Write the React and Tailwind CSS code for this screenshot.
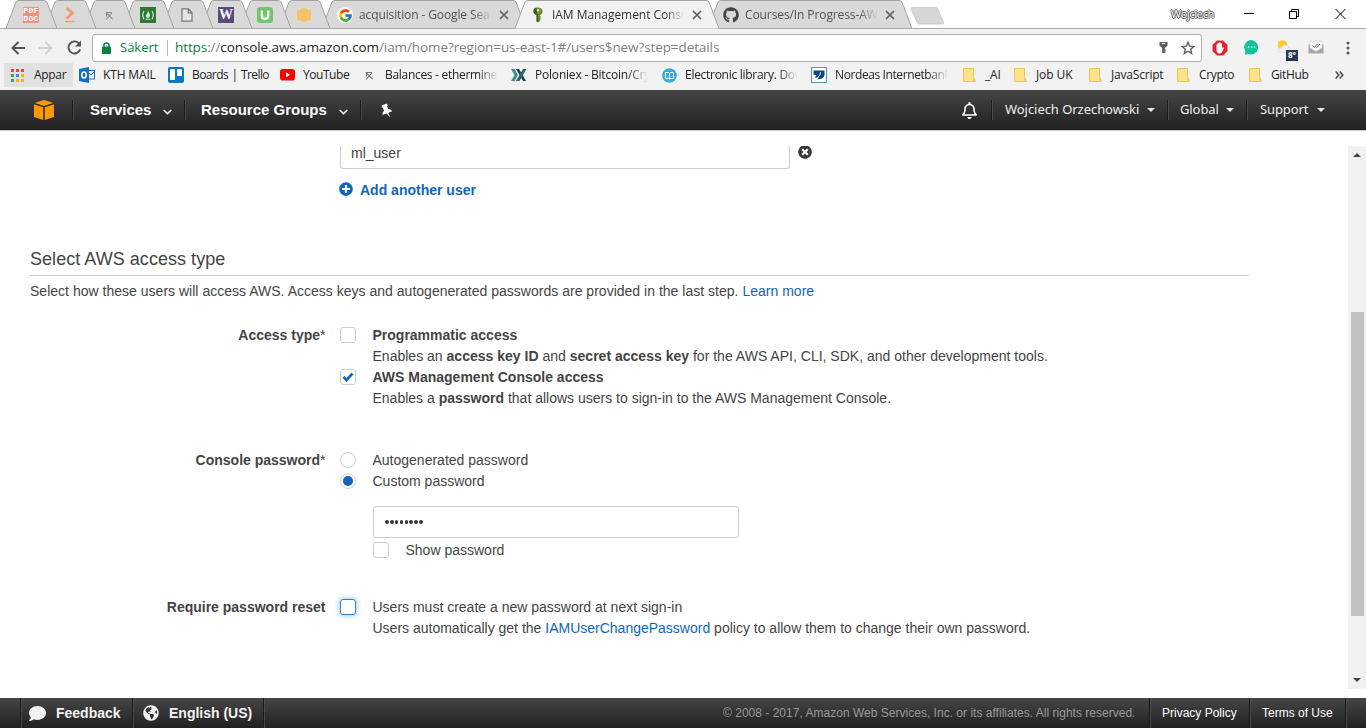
import React from "react";
import { FaComment, FaGlobeAmericas, FaPlusCircle, FaTimesCircle, FaThumbtack, FaRegBell, FaGithub } from "react-icons/fa";
import { FcGoogle } from "react-icons/fc";

/* ---------- browser chrome ---------- */

function TabShape({ w, active }) {
  return (
    <svg className="absolute inset-0" width={w} height="29" viewBox={`0 0 ${w} 29`}>
      <path
        d={`M0 28.5 L10 2 Q11 0.5 13 0.5 H${w - 13} Q${w - 11} 0.5 ${w - 10} 2 L${w} 28.5`}
        fill={active ? "#f2f2f2" : "#d9d9d9"}
        stroke="#a3a3a3"
      />
      {!active && <path d={`M0 28.5 H${w}`} stroke="#a9a9a9" />}
    </svg>
  );
}

function SmallTab({ children, z }) {
  return (
    <div className={`relative -mr-3 flex h-[29px] w-[51px] shrink-0 items-center justify-center pr-px ${z}`}>
      <TabShape w={51} />
      <div className="relative mt-px flex size-4 items-center justify-center">{children}</div>
    </div>
  );
}

function WideTab({ icon, label, active, z }) {
  return (
    <div className={`relative -mr-[11px] flex h-[29px] w-[204px] shrink-0 items-center pl-[15px] ${z}`}>
      <TabShape w={204} active={active} />
      <div className="relative mt-px flex size-4 items-center justify-center">{icon}</div>
      <div
        className={`relative ml-[6px] w-[133px] overflow-hidden text-[12px] leading-4 whitespace-nowrap [mask-image:linear-gradient(to_right,black_85%,transparent)] ${
          active ? "text-[#333]" : "text-[#505050]"
        }`}
      >
        {label}
      </div>
      <svg className="relative ml-[7px]" width="10" height="10" viewBox="0 0 10 10">
        <path d="M1 1 L9 9 M9 1 L1 9" stroke="#5f5f5f" strokeWidth="1.7" />
      </svg>
    </div>
  );
}

const BoxIcon = ({ className, size = 16, color = "#f90", gap = "#2f2f2f" }) => (
  <svg className={className} width={size} height={size} viewBox="0 0 20 20">
    <path d="M10 0 L19.5 3 L10 6 L0.5 3 Z" fill={color} />
    <path d="M0 4.2 L9.4 7.2 V20 L0 17 Z" fill={color} />
    <path d="M20 4.2 L10.6 7.2 V20 L20 17 Z" fill={color} />
    <path d="M0.3 3.6 L10 6.7 L19.7 3.6 M10 6.7 V20" stroke={gap} strokeWidth="1" fill="none" />
  </svg>
);

const MinerIcon = ({ color = "#777" }) => (
  <svg width="9" height="9" viewBox="0 0 9 9">
    <path d="M0.5 1.5 H7 M1.5 1.5 V5.5 M1.5 2 L7.5 8.2 M7 2 L1 8.5" stroke={color} strokeWidth="1.1" fill="none" />
  </svg>
);

const KeyIcon = () => (
  <svg width="10" height="16" viewBox="0 0 10 16">
    <path d="M5 0.5 C8 0.5 9.6 2.3 9.6 4.4 C9.6 6.4 8.4 7.4 7 7.9 V9 L8 10 L7 11 L8 12 L7 13 V14 L5 15.6 L3.6 14.4 V7.9 C1.6 7.4 0.4 6.2 0.4 4.4 C0.4 2.2 2 0.5 5 0.5Z" fill="#6b8e33" />
    <path d="M5.2 8 V15.2 L3.6 14.2 V7.8 C1.6 7.4 0.4 6.2 0.4 4.4 C0.4 2.6 1.6 1 3.5 0.6 L4 7Z" fill="#3f5d1c" />
    <circle cx="5" cy="3.2" r="1.2" fill="#f2f2f2" />
  </svg>
);

function TabStrip() {
  return (
    <div className="flex h-[29px] items-start bg-white pl-[6px] shadow-[inset_0_-1px_0_#a9a9a9]">
      <SmallTab z="z-[9]">
        <div className="flex size-4 flex-col items-center justify-center bg-[#ee9384] font-['Liberation_Mono',monospace] text-[8px] leading-[8px] font-bold tracking-[0.3px] text-white">
          <span>PDF</span>
          <span>DOC</span>
        </div>
      </SmallTab>
      <SmallTab z="z-[8]">
        <svg width="12" height="16" viewBox="0 0 12 16">
          <path d="M2.5 1 L8.5 6 L2.5 11.5" stroke="#f39a66" strokeWidth="2.8" fill="none" />
          <path d="M1 14.5 H10.5" stroke="#f39a66" strokeWidth="1.4" />
        </svg>
      </SmallTab>
      <SmallTab z="z-[7]"><MinerIcon color="#8f8f8f" /></SmallTab>
      <SmallTab z="z-[6]">
        <svg width="16" height="16" viewBox="0 0 16 16">
          <rect width="16" height="16" fill="#2f7a33" />
          <path d="M4 4 Q1.5 8 4 12 M12 4 Q14.5 8 12 12" stroke="#d9ecd9" strokeWidth="1.1" fill="none" />
          <path d="M8 3.5 C8.5 5.5 10.3 6.8 10 8.8 C9.8 10.2 9 10.8 8 10.8 C7 10.8 6 10.2 5.9 8.8 C5.9 7.8 6.8 7.5 7 6.5 C7.4 5.6 7.8 4.8 8 3.5Z" fill="#d9ecd9" />
          <path d="M5.5 12.2 H10.5" stroke="#d9ecd9" />
        </svg>
      </SmallTab>
      <SmallTab z="z-[5]">
        <svg width="12" height="14" viewBox="0 0 12 14">
          <path d="M1 0.8 H7.5 L11 4.5 V13.2 H1 Z M7.2 1 V4.8 H11" stroke="#777" strokeWidth="1.2" fill="#e6e6e6" />
        </svg>
      </SmallTab>
      <SmallTab z="z-[4]">
        <div className="flex size-4 items-center justify-center bg-[#5a4b7d] font-['Liberation_Serif',serif] text-[14px] leading-4 font-bold text-white">W</div>
      </SmallTab>
      <SmallTab z="z-[3]">
        <svg width="16" height="16" viewBox="0 0 16 16">
          <rect width="16" height="16" rx="3" fill="#6fc76b" />
          <path d="M4.8 3.5 V8.5 Q4.8 12 8 12 Q11.2 12 11.2 8.500 V3.500" stroke="#fff" strokeWidth="2.3" fill="none" />
        </svg>
      </SmallTab>
      <SmallTab z="z-[2]"><BoxIcon size={14} color="#f9c262" gap="#e9ae55" /></SmallTab>
      <div className="ml-1 flex">
        <WideTab
          z="z-[1]"
          icon={<span className="flex size-4 items-center justify-center rounded-full bg-white"><FcGoogle size={15} /></span>}
          label={<span className="tracking-[-0.12px]">acquisition - Google Search</span>}
        />
        <WideTab active z="z-10" icon={<KeyIcon />} label={<span className="tracking-[-0.05px]">IAM Management Console</span>} />
        <WideTab z="z-[1]" icon={<FaGithub size={16} color="#444" />} label={<span className="tracking-[-0.1px]">Courses/In Progress-AWS</span>} />
      </div>
      <svg className="mt-[7px] ml-[9px]" width="35" height="18" viewBox="0 0 35 18">
        <path d="M2 0.5 H26 Q27.500 0.500 28 2 L33.500 15.500 Q34 17 32 17 H10 Q8 17 7.300 15.500 L1 2 Q0.500 0.500 2 0.500Z" fill="#d6d6d6" stroke="#c4c4c4" strokeWidth="0.8" />
      </svg>
      <div className="ml-auto flex items-center pt-[6px]">
        <span className="mr-[30px] text-[11px] leading-4 tracking-[-0.35px] text-white [text-shadow:1px_0_0_#555,-1px_0_0_#555,0_1px_0_#555,0_-1px_0_#555]">Wojciech</span>
        <svg className="mr-[35px]" width="10" height="10" viewBox="0 0 10 10"><path d="M0 4.500 H10" stroke="#000" /></svg>
        <svg className="mr-[36px]" width="10" height="10" viewBox="0 0 10 10">
          <path d="M0.500 2.500 H7.500 V9.500 H0.500 Z M2.500 2.500 V0.500 H9.500 V7.500 H7.500" stroke="#000" fill="none" />
        </svg>
        <svg className="mr-5" width="11" height="10" viewBox="0 0 11 10"><path d="M0.500 0 L10.500 10 M10.500 0 L0.500 10" stroke="#000" /></svg>
      </div>
    </div>
  );
}

function AddressBar() {
  return (
    <div className="flex h-[36px] items-center pt-px">
      <svg className="ml-[11px]" width="14" height="14" viewBox="0 0 14 14">
        <path d="M14 7 H1.500 M7.500 1 L1.500 7 L7.500 13" stroke="#555" strokeWidth="1.900" fill="none" />
      </svg>
      <svg className="ml-[14px]" width="14" height="14" viewBox="0 0 14 14">
        <path d="M0 7 H12.500 M6.500 1 L12.500 7 L6.500 13" stroke="#d0d0d0" strokeWidth="1.900" fill="none" />
      </svg>
      <svg className="ml-[14px]" width="15" height="15" viewBox="0 0 15 15">
        <path d="M13.200 9.400 A6 6 0 1 1 11.800 3.200 L13 4.500" stroke="#555" strokeWidth="1.900" fill="none" />
        <path d="M14 0.500 V6.500 H8 Z" fill="#555" />
      </svg>
      <div className="ml-[10px] flex h-[28px] w-[1110px] items-center rounded-[3px] border border-[#b0b0b0] bg-white text-[14px]">
        <svg className="ml-[9px]" width="9" height="12" viewBox="0 0 9 12">
          <rect y="4.500" width="9" height="7.500" rx="0.800" fill="#0b8043" />
          <path d="M2 5 V3.200 Q2 1 4.500 1 Q7 1 7 3.200 V5" stroke="#0b8043" strokeWidth="1.500" fill="none" />
        </svg>
        <span className="ml-[9px] w-[38px] text-[13px] text-[#0b8043]">Säkert</span>
        <span className="ml-[9px] h-4 w-px bg-[#bbb]" />
        <span className="ml-[7px] text-[13.5px] tracking-[-0.095px] whitespace-nowrap text-[#808080]">
          <span className="text-[#0b8043]">https</span>://<span className="text-[#222]">console.aws.amazon.com</span>/iam/home?region=us-east-1#/users$new?step=details
        </span>
        <svg className="ml-auto" width="9" height="13" viewBox="0 0 9 13">
          <path d="M0.500 1 H8.500 V4.500 L6.500 6.500 H5.800 V12 H3.200 V6.500 H2.500 L0.500 4.500 Z" fill="#5a5a5a" />
          <path d="M2.800 2.600 H6.200" stroke="#fff" />
          <path d="M5.800 9 H7 M5.800 11 H7" stroke="#5a5a5a" />
        </svg>
        <svg className="mr-[6px] ml-[13px]" width="14" height="14" viewBox="0 0 14 14">
          <path d="M7 1.300 L8.700 5.200 L12.900 5.600 L9.700 8.300 L10.700 12.500 L7 10.200 L3.300 12.500 L4.300 8.300 L1.100 5.600 L5.300 5.200 Z" stroke="#5a5a5a" strokeWidth="1.400" fill="none" />
        </svg>
      </div>
      <svg className="ml-[10px]" width="16" height="16" viewBox="0 0 16 16">
        <path d="M5 0.500 H11 L15.500 5 V11 L11 15.500 H5 L0.500 11 V5 Z" fill="#e0242c" />
        <path d="M4.500 8.500 V4.600 Q5 3.800 5.600 4.600 V3.200 Q6.300 2.400 7 3.200 V2.600 Q7.800 1.800 8.500 2.600 V3.600 Q9.300 2.800 10 3.600 V8.500 L11 7.300 Q12.200 6.800 12 8 L9.800 12.500 Q9 13.500 7.500 13.500 Q4.500 13.300 4.500 10 Z" fill="#fff" />
      </svg>
      <svg className="ml-4" width="15" height="15" viewBox="0 0 15 15">
        <path d="M7.500 0 A7.300 7.200 0 1 1 4.500 14 L0.800 14.800 L1.500 11.200 A7.300 7.200 0 0 1 7.500 0Z" fill="#15c39a" />
        <circle cx="4.500" cy="7" r="0.800" fill="#fff" /><circle cx="7.500" cy="7" r="0.800" fill="#fff" /><circle cx="10.500" cy="7" r="0.800" fill="#fff" />
      </svg>
      <div className="relative ml-[18px] h-5 w-[21px] pt-[2px]">
        <svg width="15" height="14" viewBox="0 0 15 14">
          <circle cx="5.500" cy="5" r="4.800" fill="#fcc92f" />
          <path d="M3.500 12.500 Q0.500 12 1 9.500 Q1.800 7.500 4 8 Q5.500 4.500 9 5 Q11.500 5.500 12 8 Q14.500 8.500 14 11 Q13.500 12.500 12 12.500Z" fill="#f0f0f0" stroke="#d5d5d5" strokeWidth="0.700" />
        </svg>
        <span className="absolute top-[12px] left-[9px] flex h-[11px] w-3 items-center justify-center bg-[#2b3658] text-[8px] leading-none font-bold text-white">8°</span>
      </div>
      <svg className="ml-[10px]" width="16" height="15" viewBox="0 0 16 15">
        <path d="M0.500 5 L3 3 V1.500 H13 V3 L15.500 5 V13.500 H0.500Z" fill="#a8a8a8" />
        <path d="M2 1 H14 V8 L8 11.500 L2 8Z" fill="#fafafa" stroke="#c5c5c5" strokeWidth="0.600" />
        <path d="M4.500 5.500 L6.500 7.500 L9.500 4 M7.500 6.800 L8.500 7.700 L12 4" stroke="#666" fill="none" />
      </svg>
      <svg className="ml-[22px]" width="4" height="14" viewBox="0 0 4 14">
        <circle cx="2" cy="2" r="1.500" fill="#555" /><circle cx="2" cy="7" r="1.500" fill="#555" /><circle cx="2" cy="12" r="1.500" fill="#555" />
      </svg>
    </div>
  );
}

const FolderIcon = () => (
  <svg width="13" height="14" viewBox="0 0 13 14">
    <path d="M0.500 0.500 H10.500 V9 L12.500 13.500 H0.500 Z" fill="#ffe28c" stroke="#e8c75d" />
    <path d="M10.500 9 V13.500" stroke="#e8c75d" />
  </svg>
);

const icons = {
  outlook: (
    <svg width="16" height="16" viewBox="0 0 16 16">
      <rect x="8.500" y="3.500" width="7" height="8.500" fill="#fff" stroke="#0f6fc5" />
      <path d="M8.500 4.500 L12 8 L15.500 4.500" stroke="#0f6fc5" fill="none" />
      <path d="M0 2 L10 0 V16 L0 14Z" fill="#0f6fc5" />
      <ellipse cx="5" cy="8" rx="2.200" ry="2.900" stroke="#fff" strokeWidth="1.500" fill="none" />
    </svg>
  ),
  trello: (
    <svg width="16" height="16" viewBox="0 0 16 16">
      <rect width="16" height="16" rx="2" fill="#0b78bf" />
      <rect x="2" y="2" width="5" height="11" rx="0.800" fill="#fff" /><rect x="9" y="2" width="5" height="7" rx="0.800" fill="#fff" />
    </svg>
  ),
  youtube: (
    <svg width="15" height="12" viewBox="0 0 15 12"><rect width="15" height="11.500" rx="2.800" fill="#f00" /><path d="M6 3.300 L10 5.800 L6 8.300Z" fill="#fff" /></svg>
  ),
  miner: <MinerIcon />,
  poloniex: (
    <svg width="16" height="14" viewBox="0 0 16 14">
      <path d="M0 1 H3.500 L7 7 L3.500 13 H0 L3.500 7Z" fill="#3f8f8d" />
      <path d="M5 1 H8 L15 13 H12Z" fill="#1f3f46" />
      <path d="M12 1 H15.500 L8.500 13 H5Z" fill="#2a6a6c" />
    </svg>
  ),
  library: (
    <svg width="15" height="15" viewBox="0 0 15 15">
      <circle cx="7.500" cy="7.500" r="7.300" fill="#33aed8" />
      <path d="M3.500 4.500 H6.500 L7.500 5.200 L8.500 4.500 H11.500 V10.500 H8.500 L7.500 11 L6.500 10.500 H3.500Z M7.500 5.200 V11" stroke="#fff" fill="none" />
    </svg>
  ),
  nordea: (
    <svg width="16" height="16" viewBox="0 0 16 16">
      <rect x="0.500" y="0.500" width="15" height="15" fill="#fff" stroke="#5d93b5" />
      <path d="M2.500 3.500 H13.500 V8 Q13 12 6 12.500 L8 10.500 H3.500 L5.500 8.500 L2.500 7.500Z" fill="#0a4a7c" />
      <path d="M9.500 5 Q9.500 8 7 10.500" stroke="#fff" strokeWidth="0.800" fill="none" />
    </svg>
  ),
  folder: <FolderIcon />,
};

const bookmarks = [
  ["outlook", "KTH MAIL", "w-[89px] tracking-[-0.15px]"],
  ["trello", "Boards | Trello", "w-[111px] tracking-[-0.6px] [word-spacing:1px]"],
  ["youtube", "YouTube", "w-[82px] tracking-[-0.45px]"],
  ["miner", "Balances - ethermine", "w-[150px] tracking-[-0.3px]", true],
  ["poloniex", "Poloniex - Bitcoin/Cryp", "w-[150px] tracking-[-0.2px]", true],
  ["library", "Electronic library. Down", "w-[150px] tracking-[-0.28px]", true],
  ["nordea", "Nordeas Internetbank", "w-[150px] tracking-[-0.4px]", true],
  ["folder", "_AI", "w-[51px] tracking-[-0.2px]"],
  ["folder", "Job UK", "w-[75px] tracking-[-0.1px]"],
  ["folder", "JavaScript", "w-[88px] tracking-[-0.2px]"],
  ["folder", "Crypto", "w-[72px] tracking-[-0.35px]"],
  ["folder", "GitHub", "w-[88px] tracking-[-0.35px]"],
];

const appDots = ["#dd4b39", "#dd4b39", "#dd4b39", "#3aa757", "#4285f4", "#f4b400", "#3aa757", "#f4b400", "#f4b400"];

function BookmarksBar() {
  return (
    <div className="flex h-[25px] items-start text-[12px] text-[#222]">
      <div className="-mt-[2px] mr-[6px] ml-1 flex h-6 w-[69px] items-center bg-[#e1e1e1] pl-[7px]">
        <svg width="13" height="13" viewBox="0 0 13 13">
          {appDots.map((c, i) => (
            <rect key={i} x={(i % 3) * 5} y={Math.floor(i / 3) * 5} width="3" height="3" fill={c} />
          ))}
        </svg>
        <span className="ml-[10px] tracking-[-0.3px]">Appar</span>
      </div>
      {bookmarks.map(([icon, label, cls, fade]) => (
        <div key={label} className={`flex h-5 shrink-0 items-center whitespace-nowrap ${cls}`}>
          <span className="mr-2 flex w-4 shrink-0 justify-center">{icons[icon]}</span>
          <span className={fade ? "w-[113px] overflow-hidden [mask-image:linear-gradient(to_right,black_82%,transparent)]" : ""}>{label}</span>
        </div>
      ))}
      <svg className="mt-[6px]" width="9" height="8" viewBox="0 0 9 8"><path d="M0.700 0.500 L3.800 4 L0.700 7.500 M4.700 0.500 L7.800 4 L4.700 7.500" stroke="#444" strokeWidth="1.500" fill="none" /></svg>
    </div>
  );
}

/* ---------- console ---------- */

const Caret = ({ className = "" }) => (
  <svg className={className} width="9" height="6" viewBox="0 0 9 6"><path d="M0.700 1 L4.500 4.600 L8.300 1" stroke="#eee" strokeWidth="1.700" fill="none" /></svg>
);
const Triangle = ({ className = "" }) => (
  <svg className={className} width="8" height="4" viewBox="0 0 8 4"><path d="M0 0 H8 L4 4Z" fill="#e6e6e6" /></svg>
);
const Divider = ({ className = "" }) => <span className={`w-0.5 shrink-0 border-l border-[#1a1a1a] bg-[#4a4a4a] ${className}`} />;

function ConsoleNav() {
  return (
    <nav className="flex h-10 items-center bg-linear-to-b from-[#464646] to-[#212121] text-white">
      <BoxIcon className="ml-[34px]" size={20} />
      <Divider className="ml-[18px] h-5" />
      <span className="ml-4 w-[61px] text-[15px] font-bold tracking-[-0.05px]">Services</span>
      <Caret className="mt-[3px] ml-[12px]" />
      <Divider className="ml-[12px] h-5" />
      <span className="ml-[15px] w-[126px] text-[15px] font-bold whitespace-nowrap">Resource Groups</span>
      <Caret className="mt-[3px] ml-[12px]" />
      <Divider className="ml-[12px] h-5" />
      <svg className="ml-[18px]" width="13" height="15" viewBox="0 0 13 15">
        <path d="M1.500 2.500 L7 0.500 L7.800 2.500 L7 3.300 L8.300 6 Q11 6 12.300 8.200 L8.300 9.800 L10.200 14.500 L6.500 10.500 L2.500 12 Q1.800 9.500 4 7.700 L2.900 4.800 L1.900 4.500 Z" fill="#fff" />
      </svg>
      <div className="ml-auto flex h-full items-center font-['Noto_Sans',sans-serif] text-[13px] whitespace-nowrap text-[#eee]">
        <FaRegBell size={17} color="#fff" />
        <Divider className="ml-[13px] h-5" />
        <span className="ml-3 w-[134px] tracking-[-0.05px]">Wojciech Orzechowski</span>
        <Triangle className="ml-[8px]" />
        <Divider className="ml-[12px] h-5" />
        <span className="ml-[11px] w-[38px] tracking-[-0.1px]">Global</span>
        <Triangle className="ml-[8px]" />
        <Divider className="ml-[12px] h-5" />
        <span className="ml-3 w-[48px] tracking-[-0.1px]">Support</span>
        <Triangle className="mr-[41px] ml-[9px]" />
      </div>
    </nav>
  );
}

function Check({ checked, focused }) {
  return (
    <span
      className={`flex size-4 shrink-0 items-center justify-center rounded-[3px] border bg-white ${
        focused ? "border-[#3b7fc4] shadow-[0_0_5px_1px_#9fd0fb]" : "border-[#ccc]"
      }`}
    >
      {checked && (
        <svg width="12" height="10" viewBox="0 0 12 10"><path d="M1.500 5 L4.500 8 L10.500 1.500" stroke="#1166bb" strokeWidth="2.600" fill="none" /></svg>
      )}
    </span>
  );
}

function Radio({ checked }) {
  return (
    <span className="flex size-4 shrink-0 items-center justify-center rounded-full border border-[#ccc] bg-white">
      {checked && <span className="size-[10px] rounded-full bg-[#1166bb]" />}
    </span>
  );
}

function Option({ control, children }) {
  return (
    <div className="flex gap-[16.5px]">
      <span className="mt-[2px] flex h-4 w-4">{control}</span>
      <div>{children}</div>
    </div>
  );
}

function Field({ label, className, children }) {
  return (
    <div className={`grid grid-cols-[295.5px_1fr] gap-x-[14.5px] ${className}`}>
      <div className="text-right font-bold">{label}</div>
      <div>{children}</div>
    </div>
  );
}

const star = <span className="font-normal">*</span>;
const link = "text-[#1166bb]";

function Main() {
  return (
    <div className="flex h-[568px] border-t border-[#ccc] bg-white pt-[15px] pb-[9px] text-[#444]">
      <main className="h-[543px] w-[1348px] overflow-hidden pr-[99px] pl-[30px] text-[14px] leading-[21px] whitespace-nowrap">
        <div className="ml-[310px] flex h-[23px] gap-2">
          <div className="h-full w-[450px] rounded-b-[3px] border-x border-b border-[#ccc] pl-[10px] leading-[14px]">ml_user</div>
          <FaTimesCircle className="-mt-px" size={14} color="#3a3a3a" />
        </div>
        <div className={`mt-[11px] ml-[309px] flex items-center gap-[7px] font-bold ${link}`}>
          <FaPlusCircle className="mb-[3px]" size={14} />
          <span>Add another user</span>
        </div>
        <h2 className="mt-[45px] h-[30px] border-b border-[#ccc] text-[18px] leading-[26px] tracking-[0.04px]">Select AWS access type</h2>
        <p className="mt-[5px] tracking-[0.015px]">
          Select how these users will access AWS. Access keys and autogenerated passwords are provided in the last step.{" "}
          <span className={link}>Learn more</span>
        </p>

        <Field className="mt-[23px]" label={<>Access type{star}</>}>
          <Option control={<Check />}>
            <b>Programmatic access</b>
            <p className="tracking-[0.01px]">Enables an <b>access key ID</b> and <b>secret access key</b> for the AWS API, CLI, SDK, and other development tools.</p>
          </Option>
          <Option control={<Check checked />}>
            <b>AWS Management Console access</b>
            <p>Enables a <b>password</b> that allows users to sign-in to the AWS Management Console.</p>
          </Option>
        </Field>

        <Field className="mt-[41px]" label={<>Console password{star}</>}>
          <Option control={<Radio />}>Autogenerated password</Option>
          <Option control={<Radio checked />}>Custom password</Option>
          <div className="mt-[14px] ml-[33px] flex h-8 w-[366px] items-center gap-[1.2px] rounded-[3px] border border-[#ccc] pl-[11px]">
            {Array.from({ length: 8 }, (_, i) => (
              <span key={i} className="size-[3.7px] rounded-full bg-[#333]" />
            ))}
          </div>
          <div className="mt-[2px] ml-[33px]">
            <Option control={<Check />}>Show password</Option>
          </div>
        </Field>

        <Field className="mt-9" label="Require password reset">
          <Option control={<Check focused />}>
            <p>Users must create a new password at next sign-in</p>
            <p>Users automatically get the <span className={link}>IAMUserChangePassword</span> policy to allow them to change their own password.</p>
          </Option>
        </Field>
      </main>
      <div className="flex h-[543px] w-[18px] flex-col items-center bg-[#f1f1f1]">
        <svg className="mt-[7px]" width="8" height="4" viewBox="0 0 8 4"><path d="M0 4 L4 0 L8 4Z" fill="#444" /></svg>
        <div className="mt-[155px] h-[304px] w-[13px] bg-[#c1c1c1]" />
        <svg className="mt-auto mb-[7px]" width="8" height="4" viewBox="0 0 8 4"><path d="M0 0 H8 L4 4Z" fill="#444" /></svg>
      </div>
    </div>
  );
}

function Footer() {
  return (
    <footer className="flex h-[30px] items-center bg-linear-to-b from-[#464646] to-[#212121] text-[14px] font-bold whitespace-nowrap text-[#f2f2f2]">
      <Divider className="ml-5 h-full" />
      <FaComment className="ml-[7px]" size={17} />
      <span className="ml-[10px] w-[65px]">Feedback</span>
      <Divider className="ml-[11px] h-full" />
      <FaGlobeAmericas className="ml-[9px]" size={16} />
      <span className="ml-[10px] w-[84px]">English (US)</span>
      <Divider className="ml-[10px] h-full" />
      <div className="ml-auto flex h-full items-center text-[12px] font-normal">
        <span className="w-[414px] tracking-[0.015px] text-[#999]">© 2008 - 2017, Amazon Web Services, Inc. or its affiliates. All rights reserved.</span>
        <Divider className="ml-3 h-full" />
        <span className="ml-[11px] w-[75px] text-white">Privacy Policy</span>
        <Divider className="ml-3 h-full" />
        <span className="ml-[11px] w-[71px] text-white">Terms of Use</span>
        <Divider className="mr-[19px] ml-3 h-full" />
      </div>
    </footer>
  );
}

export default function App() {
  return (
    <div className="h-[728px] w-[1366px] overflow-hidden bg-white font-['Liberation_Sans',Arial,sans-serif]">
      <header className="h-[90px] bg-[#f2f2f2] font-['Open_Sans','Noto_Sans',sans-serif]">
        <TabStrip />
        <AddressBar />
        <BookmarksBar />
      </header>
      <ConsoleNav />
      <Main />
      <Footer />
    </div>
  );
}
